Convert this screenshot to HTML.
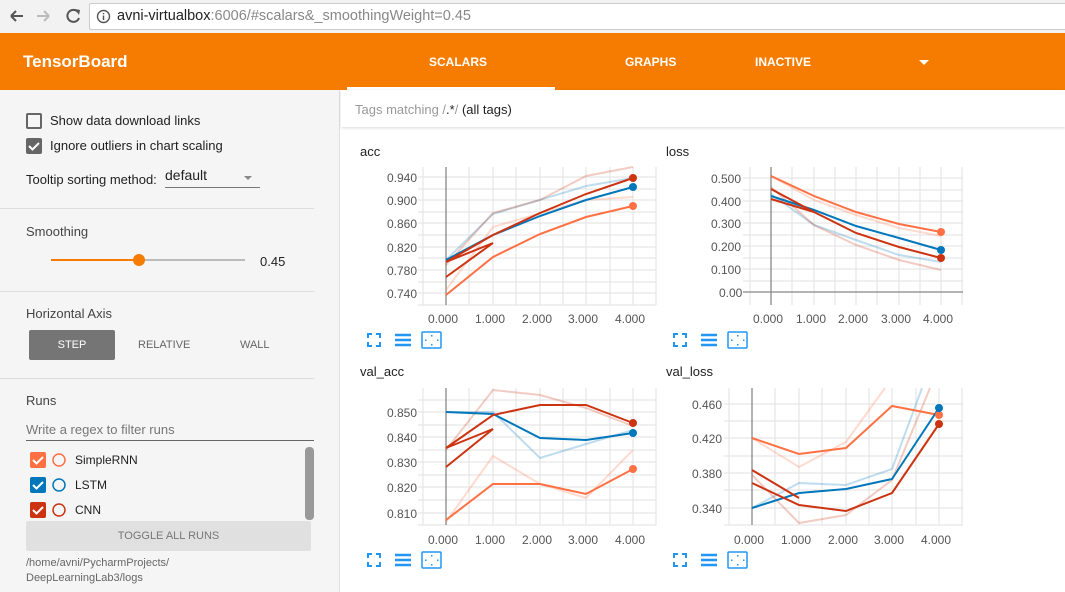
<!DOCTYPE html>
<html><head><meta charset="utf-8"><style>
*{margin:0;padding:0;box-sizing:border-box}
body{width:1065px;height:592px;overflow:hidden;font-family:"Liberation Sans",sans-serif;background:#fff;position:relative;color:#212121}
.abs{position:absolute}
#bar{left:0;top:0;width:1065px;height:33px;background:#f2f2f2}
#url{left:89px;top:3px;width:990px;height:27px;background:#fff;border:1px solid #ccc;border-radius:2px;font-size:14.5px;line-height:25px;padding-left:27px;color:#222}
#hdr{left:0;top:33px;width:1065px;height:57px;background:#f57c00;color:#fff}
#left{left:0;top:90px;width:340px;height:502px;background:#f5f5f5;border-right:1px solid #e0e0e0}
.t{font-size:13px;color:#212121}
.sep{left:0;width:314px;height:1px;background:#ddd}
.lbl{font-size:12px;fill:#555;font-family:"Liberation Sans",sans-serif}
</style></head><body>
<div id="bar" class="abs">
<svg class="abs" style="left:0;top:0" width="90" height="33"><path d="M11 16h12M11 16l5-5M11 16l5 5" stroke="#555" stroke-width="2" fill="none"/><path d="M37 16h12M49 16l-5-5M49 16l-5 5" stroke="#bbb" stroke-width="2" fill="none"/><path d="M78 12a6 6 0 1 0 1 6" stroke="#555" stroke-width="2" fill="none"/><path d="M75 9l5 1-1 5z" fill="#555"/></svg>
<div id="url" class="abs">avni-virtualbox<span style="color:#888">:6006/#scalars&amp;_smoothingWeight=0.45</span></div>
<svg class="abs" style="left:96px;top:9px" width="15" height="15"><circle cx="7.5" cy="7.5" r="6" stroke="#555" stroke-width="1.4" fill="none"/><path d="M7.5 6.5v4.5M7.5 4v1.2" stroke="#555" stroke-width="1.5"/></svg>
</div>
<div id="hdr" class="abs">
<div class="abs" style="left:23px;top:19px;font-size:17px;font-weight:bold">TensorBoard</div>
<div class="abs" style="left:429px;top:22px;font-size:12px;font-weight:bold">SCALARS</div>
<div class="abs" style="left:347px;top:54px;width:208px;height:3px;background:#fff"></div>
<div class="abs" style="left:625px;top:22px;font-size:12px;font-weight:bold">GRAPHS</div>
<div class="abs" style="left:755px;top:22px;font-size:12px;font-weight:bold">INACTIVE</div>
<div class="abs" style="left:919px;top:27px;width:0;height:0;border-left:5px solid transparent;border-right:5px solid transparent;border-top:5px solid #fff"></div>
</div>
<div id="left" class="abs">
<div class="abs" style="left:26px;top:23px;width:16px;height:16px;border:2px solid #666;border-radius:2px"></div>
<div class="abs t" style="left:50px;top:23px">Show data download links</div>
<div class="abs" style="left:26px;top:48px;width:16px;height:16px;background:#666;border-radius:2px"></div>
<svg class="abs" style="left:26px;top:48px" width="16" height="16"><path d="M3 8l3.5 3.5L13 5" stroke="#fff" stroke-width="2" fill="none"/></svg>
<div class="abs t" style="left:50px;top:48px">Ignore outliers in chart scaling</div>
<div class="abs t" style="left:26px;top:82px">Tooltip sorting method:</div>
<div class="abs" style="left:165px;top:77px;font-size:14px">default</div>
<div class="abs" style="left:165px;top:97px;width:95px;height:1px;background:#777"></div>
<div class="abs" style="left:244px;top:86px;border-left:4px solid transparent;border-right:4px solid transparent;border-top:4px solid #888"></div>
<div class="abs sep" style="top:118px"></div>
<div class="abs t" style="left:26px;top:134px;color:#444">Smoothing</div>
<div class="abs" style="left:51px;top:169px;width:194px;height:2px;background:#bbb"></div>
<div class="abs" style="left:51px;top:169px;width:88px;height:2px;background:#f57c00"></div>
<div class="abs" style="left:133px;top:164px;width:12px;height:12px;border-radius:50%;background:#f57c00"></div>
<div class="abs t" style="left:260px;top:164px">0.45</div>
<div class="abs sep" style="top:201px"></div>
<div class="abs t" style="left:26px;top:216px;color:#444">Horizontal Axis</div>
<div class="abs" style="left:29px;top:240px;width:86px;height:30px;background:#757575;border-radius:2px;color:#fff;font-size:11px;text-align:center;line-height:30px">STEP</div>
<div class="abs" style="left:138px;top:249px;font-size:11px;color:#666">RELATIVE</div>
<div class="abs" style="left:240px;top:249px;font-size:11px;color:#666">WALL</div>
<div class="abs sep" style="top:288px"></div>
<div class="abs t" style="left:26px;top:303px;color:#444">Runs</div>
<div class="abs" style="left:26px;top:332px;font-size:13px;color:#777">Write a regex to filter runs</div>
<div class="abs" style="left:26px;top:350px;width:288px;height:1px;background:#666"></div>
<div class="abs" style="left:30px;top:362px;width:16px;height:16px;background:#ff7043;border-radius:2px"></div>
<div class="abs" style="left:30px;top:387px;width:16px;height:16px;background:#0077bb;border-radius:2px"></div>
<div class="abs" style="left:30px;top:412px;width:16px;height:16px;background:#cc3311;border-radius:2px"></div>
<svg class="abs" style="left:30px;top:362px" width="40" height="70"><g stroke="#fff" stroke-width="2" fill="none"><path d="M3 8l3.5 3.5L13 5"/><path d="M3 33l3.5 3.5L13 30"/><path d="M3 58l3.5 3.5L13 55"/></g><circle cx="29" cy="8" r="6" stroke="#ff7043" stroke-width="1.5" fill="none"/><circle cx="29" cy="33" r="6" stroke="#0077bb" stroke-width="1.5" fill="none"/><circle cx="29" cy="58" r="6" stroke="#cc3311" stroke-width="1.5" fill="none"/></svg>
<div class="abs t" style="left:75px;top:363px;font-size:12px">SimpleRNN</div>
<div class="abs t" style="left:75px;top:388px;font-size:12px">LSTM</div>
<div class="abs t" style="left:75px;top:413px;font-size:12px">CNN</div>
<div class="abs" style="left:305px;top:357px;width:9px;height:73px;background:#999;border-radius:4px"></div>
<div class="abs" style="left:26px;top:431px;width:285px;height:30px;background:#e0e0e0;border-radius:2px;color:#777;font-size:11px;text-align:center;line-height:30px">TOGGLE ALL RUNS</div>
<div class="abs" style="left:26px;top:466px;font-size:11px;color:#666;line-height:15px">/home/avni/PycharmProjects/<br>DeepLearningLab3/logs</div>
</div>
<div class="abs" style="left:341px;top:90px;width:724px;height:37px;box-shadow:0 1px 3px rgba(0,0,0,.15);background:#fff"></div>
<div class="abs" style="left:355px;top:102px;font-size:13px;color:#999">Tags matching /<span style="color:#222">.*</span>/ <span style="color:#222">(all tags)</span></div>
<div class="abs t" style="left:360px;top:144px">acc</div>
<div class="abs t" style="left:666px;top:144px">loss</div>
<div class="abs t" style="left:360px;top:364px">val_acc</div>
<div class="abs t" style="left:666px;top:364px">val_loss</div>
<svg class="abs" style="left:0;top:0" width="1065" height="592">
<g stroke="#e2e2e2" stroke-width="1">
<path d="M423 167V305M469 167V305M493 167V305M516 167V305M540 167V305M563 167V305M586 167V305M610 167V305M633 167V305M656 167V305M418 177H656M418 189H656M418 200H656M418 212H656M418 223H656M418 235H656M418 247H656M418 258H656M418 270H656M418 282H656M418 293H656M418 305H656"/>
<path d="M750 167V305M792 167V305M814 167V305M835 167V305M856 167V305M877 167V305M899 167V305M920 167V305M941 167V305M962 167V305M743 178H963M743 190H963M743 201H963M743 212H963M743 223H963M743 235H963M743 246H963M743 258H963M743 269H963M743 281H963"/>
<path d="M423 388V525M469 388V525M493 388V525M516 388V525M540 388V525M563 388V525M586 388V525M610 388V525M633 388V525M656 388V525M418 400H656M418 412H656M418 425H656M418 437H656M418 450H656M418 462H656M418 475H656M418 487H656M418 500H656M418 513H656M418 525H656"/>
<path d="M729 388V525M775 388V525M799 388V525M822 388V525M846 388V525M869 388V525M892 388V525M916 388V525M939 388V525M962 388V525M724 404H963M724 421H963M724 438H963M724 456H963M724 473H963M724 490H963M724 508H963M724 525H963"/>
</g>
<g stroke="#888" stroke-width="1.3"><path d="M446 167V305M771 167V305M743 292H963M446 388V525M752 388V525"/></g>
<g class="lbl" font-size="12" fill="#555" font-family="Liberation Sans">
<text x="387" y="182">0.940</text><text x="387" y="205">0.900</text><text x="387" y="228">0.860</text><text x="387" y="252">0.820</text><text x="387" y="275">0.780</text><text x="387" y="298">0.740</text>
<text x="428" y="323">0.000</text><text x="475" y="323">1.000</text><text x="522" y="323">2.000</text><text x="568" y="323">3.000</text><text x="615" y="323">4.000</text>
<text x="711" y="183">0.500</text><text x="711" y="206">0.400</text><text x="711" y="228">0.300</text><text x="711" y="251">0.200</text><text x="711" y="274">0.100</text><text x="719" y="297">0.00</text>
<text x="753" y="323">0.000</text><text x="796" y="323">1.000</text><text x="838" y="323">2.000</text><text x="881" y="323">3.000</text><text x="923" y="323">4.000</text>
<text x="387" y="417">0.850</text><text x="387" y="442">0.840</text><text x="387" y="467">0.830</text><text x="387" y="492">0.820</text><text x="387" y="518">0.810</text>
<text x="428" y="544">0.000</text><text x="475" y="544">1.000</text><text x="522" y="544">2.000</text><text x="568" y="544">3.000</text><text x="615" y="544">4.000</text>
<text x="692" y="409">0.460</text><text x="692" y="443">0.420</text><text x="692" y="478">0.380</text><text x="692" y="513">0.340</text>
<text x="734" y="544">0.000</text><text x="781" y="544">1.000</text><text x="828" y="544">2.000</text><text x="874" y="544">3.000</text><text x="921" y="544">4.000</text>
</g>
<g fill="none" stroke-width="2" stroke-opacity=".25">
<path stroke="#0077bb" d="M446 260L493 214L586 186L633 178"/>
<path stroke="#cc3311" d="M446 265L493 213L540 200L586 176L633 167"/>
<path stroke="#ff7043" d="M446 290L493 227L586 200L633 197"/>
<path stroke="#0077bb" d="M771 194L814 225L856 240L899 255L941 262"/>
<path stroke="#cc3311" d="M771 187L814 225L856 245L899 260L941 270"/>
<path stroke="#ff7043" d="M771 176L814 200L856 215L899 228L941 236"/>
<path stroke="#0077bb" d="M446 412L493 412L540 458L586 444L633 430"/>
<path stroke="#cc3311" d="M446 450L493 390L540 395L586 408L633 426"/>
<path stroke="#ff7043" d="M446 522L493 456L540 484L586 498L633 450"/>
<path stroke="#0077bb" d="M752 508L799 483L846 485L892 469L922 388"/>
<path stroke="#cc3311" d="M752 475L799 523L846 515L892 480L930 388"/>
<path stroke="#ff7043" d="M752 438L799 467L846 442L885 388"/>
</g>
<g fill="none" stroke-width="2">
<path stroke="#ff7043" d="M446 295L493 257L540 234L586 217L633 206"/>
<path stroke="#0077bb" d="M446 260L493 235L540 216L586 200L633 187"/>
<path stroke="#cc3311" d="M446 262L493 235L540 213L586 194L633 178M446 277L493 243L446 262"/>
<path stroke="#ff7043" d="M771 176L814 196L856 212L899 224L941 232"/>
<path stroke="#0077bb" d="M771 196L814 210L856 226L899 238L941 250"/>
<path stroke="#cc3311" d="M771 189L814 212L856 233L899 247L941 258M771 199L814 212"/>
<path stroke="#ff7043" d="M446 520L493 484L540 484L586 494L633 469"/>
<path stroke="#0077bb" d="M446 412L493 414L540 438L586 440L633 433"/>
<path stroke="#cc3311" d="M446 448L493 415L540 405L586 405L633 423M446 467L493 429L446 448"/>
<path stroke="#ff7043" d="M752 438L799 454L846 448L892 406L939 415"/>
<path stroke="#0077bb" d="M752 508L799 493L846 489L892 479L939 408"/>
<path stroke="#cc3311" d="M752 483L799 505L846 511L892 493L939 424M752 470L799 498"/>
</g>
<g>
<circle cx="633" cy="206" r="4" fill="#ff7043"/><circle cx="633" cy="187" r="4" fill="#0077bb"/><circle cx="633" cy="178" r="4" fill="#cc3311"/>
<circle cx="941" cy="232" r="4" fill="#ff7043"/><circle cx="941" cy="250" r="4" fill="#0077bb"/><circle cx="941" cy="258" r="4" fill="#cc3311"/>
<circle cx="633" cy="469" r="4" fill="#ff7043"/><circle cx="633" cy="433" r="4" fill="#0077bb"/><circle cx="633" cy="423" r="4" fill="#cc3311"/>
<circle cx="939" cy="415" r="4" fill="#ff7043"/><circle cx="939" cy="408" r="4" fill="#0077bb"/><circle cx="939" cy="424" r="4" fill="#cc3311"/>
</g>
<g stroke="#2196f3" fill="none" stroke-width="2">
<path d="M368 338v-4h4M376 334h4v4M380 342v4h-4M372 346h-4v-4"/>
<path d="M395 335h16M395 340h16M395 345h16" stroke-width="2.5"/>
<rect x="422" y="332" width="19" height="16" rx="1" stroke-width="1.5"/>
<path d="M674 338v-4h4M682 334h4v4M686 342v4h-4M678 346h-4v-4"/>
<path d="M701 335h16M701 340h16M701 345h16" stroke-width="2.5"/>
<rect x="728" y="332" width="19" height="16" rx="1" stroke-width="1.5"/>
<path d="M368 558v-4h4M376 554h4v4M380 562v4h-4M372 566h-4v-4"/>
<path d="M395 555h16M395 560h16M395 565h16" stroke-width="2.5"/>
<rect x="422" y="552" width="19" height="16" rx="1" stroke-width="1.5"/>
<path d="M674 558v-4h4M682 554h4v4M686 562v4h-4M678 566h-4v-4"/>
<path d="M701 555h16M701 560h16M701 565h16" stroke-width="2.5"/>
<rect x="728" y="552" width="19" height="16" rx="1" stroke-width="1.5"/>
</g>
<g fill="#2196f3">
<rect x="431" y="335" width="1.5" height="1.5"/><rect x="431" y="344" width="1.5" height="1.5"/><rect x="425" y="339.5" width="1.5" height="1.5"/><rect x="437" y="339.5" width="1.5" height="1.5"/>
<rect x="737" y="335" width="1.5" height="1.5"/><rect x="737" y="344" width="1.5" height="1.5"/><rect x="731" y="339.5" width="1.5" height="1.5"/><rect x="743" y="339.5" width="1.5" height="1.5"/>
<rect x="431" y="555" width="1.5" height="1.5"/><rect x="431" y="564" width="1.5" height="1.5"/><rect x="425" y="559.5" width="1.5" height="1.5"/><rect x="437" y="559.5" width="1.5" height="1.5"/>
<rect x="737" y="555" width="1.5" height="1.5"/><rect x="737" y="564" width="1.5" height="1.5"/><rect x="731" y="559.5" width="1.5" height="1.5"/><rect x="743" y="559.5" width="1.5" height="1.5"/>
</g>
</svg>
</body></html>
